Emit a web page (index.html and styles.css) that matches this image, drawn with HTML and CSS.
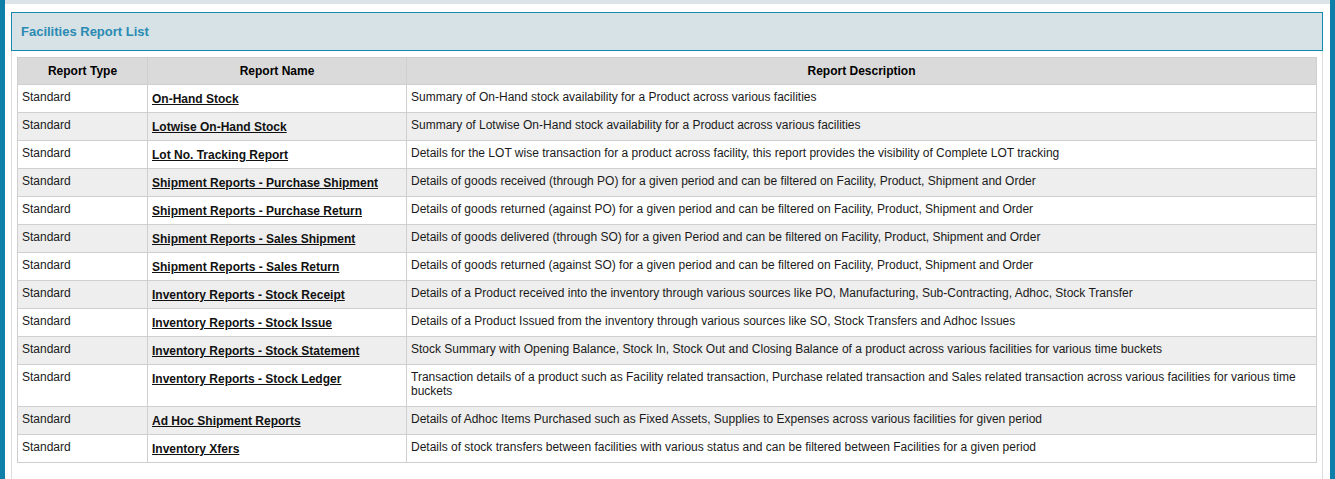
FILE: index.html
```html
<!DOCTYPE html>
<html lang="en">
<head>
  <meta charset="utf-8" />
  <title>Facilities Report List</title>
  <link rel="stylesheet" href="styles.css">
</head>
<body>
  <div class="page">
    <div class="top-strip"></div>
    <section class="panel">
      <h2 class="panel-heading">Facilities Report List</h2>
      <div class="panel-body">
        <table class="report-table">
          <colgroup>
            <col class="col-type">
            <col class="col-name">
            <col>
          </colgroup>
          <thead>
            <tr>
              <th>Report Type</th>
              <th>Report Name</th>
              <th>Report Description</th>
            </tr>
          </thead>
          <tbody>
            <tr>
              <td>Standard</td>
              <td class="name"><a href="#">On-Hand Stock</a></td>
              <td>Summary of On-Hand stock availability for a Product across various facilities</td>
            </tr>
            <tr>
              <td>Standard</td>
              <td class="name"><a href="#">Lotwise On-Hand Stock</a></td>
              <td>Summary of Lotwise On-Hand stock availability for a Product across various facilities</td>
            </tr>
            <tr>
              <td>Standard</td>
              <td class="name"><a href="#">Lot No. Tracking Report</a></td>
              <td>Details for the LOT wise transaction for a product across facility, this report provides the visibility of Complete LOT tracking</td>
            </tr>
            <tr>
              <td>Standard</td>
              <td class="name"><a href="#">Shipment Reports - Purchase Shipment</a></td>
              <td>Details of goods received (through PO) for a given period and can be filtered on Facility, Product, Shipment and Order</td>
            </tr>
            <tr>
              <td>Standard</td>
              <td class="name"><a href="#">Shipment Reports - Purchase Return</a></td>
              <td>Details of goods returned (against PO) for a given period and can be filtered on Facility, Product, Shipment and Order</td>
            </tr>
            <tr>
              <td>Standard</td>
              <td class="name"><a href="#">Shipment Reports - Sales Shipment</a></td>
              <td>Details of goods delivered (through SO) for a given Period and can be filtered on Facility, Product, Shipment and Order</td>
            </tr>
            <tr>
              <td>Standard</td>
              <td class="name"><a href="#">Shipment Reports - Sales Return</a></td>
              <td>Details of goods returned (against SO) for a given period and can be filtered on Facility, Product, Shipment and Order</td>
            </tr>
            <tr>
              <td>Standard</td>
              <td class="name"><a href="#">Inventory Reports - Stock Receipt</a></td>
              <td>Details of a Product received into the inventory through various sources like PO, Manufacturing, Sub-Contracting, Adhoc, Stock Transfer</td>
            </tr>
            <tr>
              <td>Standard</td>
              <td class="name"><a href="#">Inventory Reports - Stock Issue</a></td>
              <td>Details of a Product Issued from the inventory through various sources like SO, Stock Transfers and Adhoc Issues</td>
            </tr>
            <tr>
              <td>Standard</td>
              <td class="name"><a href="#">Inventory Reports - Stock Statement</a></td>
              <td>Stock Summary with Opening Balance, Stock In, Stock Out and Closing Balance of a product across various facilities for various time buckets</td>
            </tr>
            <tr>
              <td>Standard</td>
              <td class="name"><a href="#">Inventory Reports - Stock Ledger</a></td>
              <td>Transaction details of a product such as Facility related transaction, Purchase related transaction and Sales related transaction across various facilities for various time buckets</td>
            </tr>
            <tr>
              <td>Standard</td>
              <td class="name"><a href="#">Ad Hoc Shipment Reports</a></td>
              <td>Details of Adhoc Items Purchased such as Fixed Assets, Supplies to Expenses across various facilities for given period</td>
            </tr>
            <tr>
              <td>Standard</td>
              <td class="name"><a href="#">Inventory Xfers</a></td>
              <td>Details of stock transfers between facilities with various status and can be filtered between Facilities for a given period</td>
            </tr>
          </tbody>
        </table>
      </div>
    </section>
  </div>
</body>
</html>
```

FILE: styles.css
```css
* {
  box-sizing: border-box;
}

html,
body {
  margin: 0;
  padding: 0;
  height: 100%;
  background: #fff;
}

body {
  font-family: 'Liberation Sans', Arial, Helvetica, sans-serif;
  font-size: 12px;
  color: #1a1a1a;
}

.page {
  min-height: 100%;
  border-left: 5px solid #0e7fa8;
  border-right: 5px solid #0e7fa8;
}

.top-strip {
  height: 4px;
  background: #dde4e8;
}

.panel {
  margin: 8px 7px 0 6px;
}

.panel-heading {
  margin: 0;
  padding: 11px 9px;
  border: 1px solid #1a87ae;
  background: #d6e2e5;
  color: #2a8ab3;
  font-size: 13px;
  line-height: 15px;
  font-weight: bold;
}

.panel-body {
  padding: 6px 5px 20px;
  border-left: 1px solid #dcdcdc;
  border-right: 1px solid #dcdcdc;
  min-height: 440px;
}

.report-table {
  width: 100%;
  table-layout: fixed;
  border-collapse: collapse;
  border: 1px solid #cfcfcf;

  .col-type {
    width: 130px;
  }

  .col-name {
    width: 259px;
  }

  th,
  td {
    border: 1px solid #cfcfcf;
    line-height: 14px;
    text-align: left;
    vertical-align: top;
  }

  th {
    padding: 6px 4px;
    background: #dadada;
    color: #000;
    font-weight: bold;
    text-align: center;
  }

  td {
    padding: 5px 4px 8px;
  }

  td.name {
    padding: 7px 4px 6px;
  }

  tbody tr:nth-child(even) td {
    background: #eeeeee;
  }

  a {
    color: #111;
    font-weight: bold;
    text-decoration: underline;
  }
}
```
